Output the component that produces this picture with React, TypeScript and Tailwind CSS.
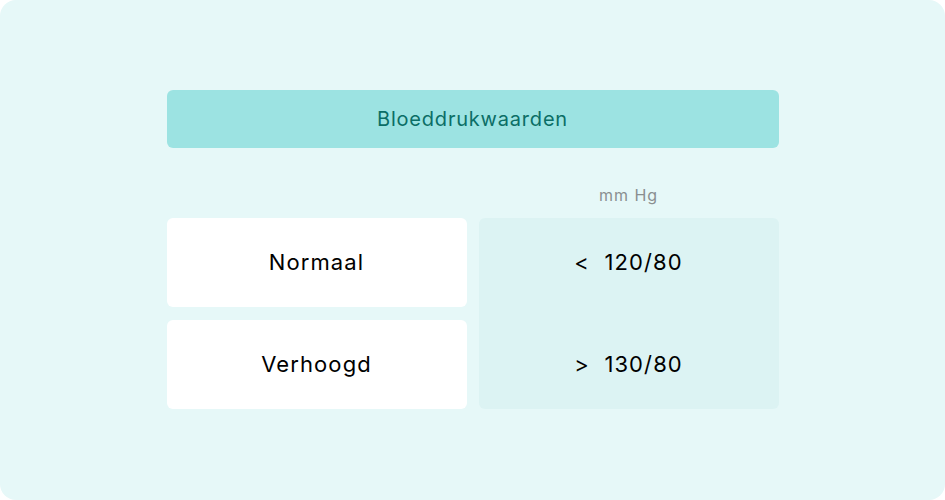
export default function App() {
  return (
    <div className="h-[500px] w-[945px] bg-white font-['Inter',sans-serif]">
      <div className="flex h-full w-full flex-col items-center rounded-[16px] bg-[#e6f8f8] pt-[90px]">
        <div className="flex h-[58px] w-[612px] items-center justify-center rounded-[6px] bg-[#9ce3e2] text-[20px] tracking-[0.04em] text-[#0b6e66]">
          Bloeddrukwaarden
        </div>
        <div className="mt-[36px] grid w-[612px] grid-cols-2 gap-x-[12px]">
          <div />
          <div className="text-center text-[16px] leading-[22px] tracking-[0.06em] text-[#8a8f90]">mm Hg</div>
        </div>
        <div className="mt-[12px] flex w-[612px] gap-[12px]">
          <div className="flex w-[300px] flex-col gap-[13px]">
            <div className="flex h-[89px] items-center justify-center rounded-[6px] bg-white text-[22px] tracking-[0.05em] text-black">
              Normaal
            </div>
            <div className="flex h-[89px] items-center justify-center rounded-[6px] bg-white text-[22px] tracking-[0.05em] text-black">
              Verhoogd
            </div>
          </div>
          <div className="flex w-[300px] flex-col gap-[13px] rounded-[6px] bg-[#dcf3f3] text-[22px] tracking-[0.05em] text-black">
            <div className="flex h-[89px] items-center justify-center whitespace-pre">&lt;  120/80</div>
            <div className="flex h-[89px] items-center justify-center whitespace-pre">&gt;  130/80</div>
          </div>
        </div>
      </div>
    </div>
  );
}
